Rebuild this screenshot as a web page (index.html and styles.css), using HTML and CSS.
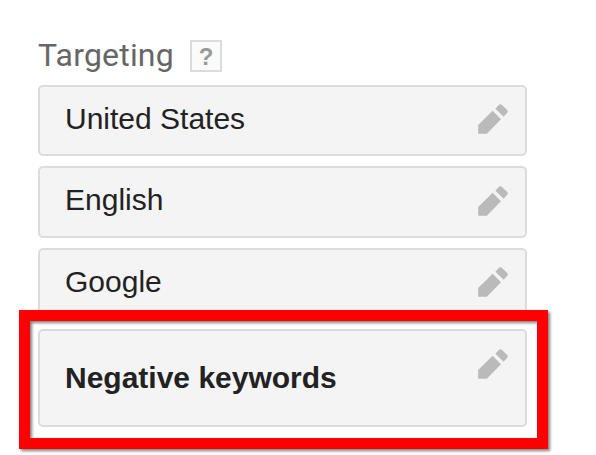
FILE: index.html
```html
<!DOCTYPE html>
<html lang="en">
<head>
    <meta charset="UTF-8">
    <meta name="viewport" content="width=device-width, initial-scale=1.0">
    <title>Targeting</title>
    <link rel="stylesheet" href="styles.css">
</head>
<body>
    <svg class="defs" width="0" height="0">
        <symbol id="pencil" viewBox="0 0 30 30">
            <path d="M0.2 29.8V20.9L14.6 6.8L23 15.2L8.8 29.8Z"/>
            <path d="M17.4 4.7L20.6 1.2Q22.4 -0.6 24.2 1.2L29 5.8Q30.6 7.4 29 9L25.6 12.7Z"/>
        </symbol>
    </svg>

    <div class="panel">
        <div class="heading">
            <h2>Targeting</h2>
            <span class="help">?</span>
        </div>

        <div class="row">
            <span>United States</span>
            <svg class="edit"><use href="#pencil"/></svg>
        </div>
        <div class="row middle">
            <span>English</span>
            <svg class="edit"><use href="#pencil"/></svg>
        </div>
        <div class="row">
            <span>Google</span>
            <svg class="edit"><use href="#pencil"/></svg>
        </div>
        <div class="row negative">
            <span>Negative keywords</span>
            <svg class="edit"><use href="#pencil"/></svg>
        </div>

        <div class="highlight"></div>
    </div>
</body>
</html>
```

FILE: styles.css
```css
body { margin: 0; background: #fff; font-family: Arial, "Liberation Sans", sans-serif; }
.defs { display: block; }
.panel { position: relative; width: 489px; padding: 36px 0 28px 38px; }
.heading { display: flex; align-items: flex-start; height: 49px; }
h2 { margin: 0; font: 400 32px/38px Roboto, sans-serif; letter-spacing: 0.2px; color: #666; width: 152px; white-space: nowrap; }
.help { box-sizing: border-box; width: 32px; height: 32px; margin-top: 4px; border: 2px solid #dcdcdc; background: #fafafa; color: #999; font-size: 24px; font-weight: bold; line-height: 29px; text-align: center; }
.row { box-sizing: border-box; display: flex; justify-content: space-between; height: 71px; margin-bottom: 10px; padding: 15px 17px 0 25px; border: 2px solid #dcdcdc; border-radius: 5px; background: #f4f4f4; color: #222; font-size: 30px; line-height: 34px; }
.row.middle { height: 72px; }
.row.negative { height: 98px; margin-bottom: 0; font-weight: bold; }
.negative span { margin-top: 15px; }
.edit { width: 30px; height: 30px; margin-top: 2px; fill: #bababa; }
.middle .edit, .negative .edit { margin-top: 3px; }

/* callout frame over the negative keywords row */
.highlight { position: absolute; left: 19px; top: 310px; box-sizing: border-box; width: 529px; height: 139px; border: 11px solid #f00; filter: drop-shadow(2px 2px 1.5px rgba(0, 0, 0, 0.5)); }
```
